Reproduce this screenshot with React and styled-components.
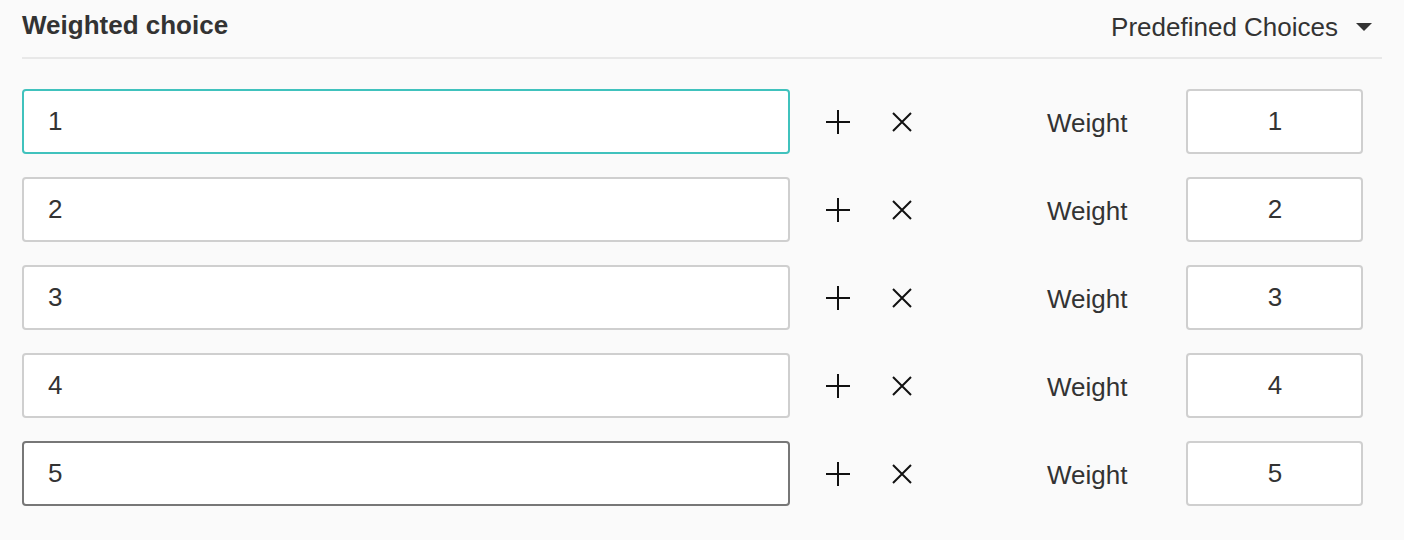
import React from 'react';
import styled, { createGlobalStyle } from 'styled-components';

const GlobalStyle = createGlobalStyle`
  html, body {
    margin: 0;
    padding: 0;
    background: #fafafa;
  }
  body {
    font-family: "Liberation Sans", Arial, sans-serif;
    color: #333;
  }
`;

const Panel = styled.div`
  padding: 0 22px;
  width: 1360px;
`;

const Header = styled.div`
  display: flex;
  align-items: flex-start;
  justify-content: space-between;
  padding: 10px 0 15px;
  border-bottom: 2px solid #e8e8e8;
`;

const Title = styled.h2`
  margin: 0;
  font-size: 26px;
  line-height: 30px;
  font-weight: bold;
  color: #333;
`;

const Dropdown = styled.button`
  display: flex;
  align-items: center;
  gap: 18px;
  padding: 0 10px 0 0;
  margin-top: 2px;
  border: 0;
  background: none;
  font-family: inherit;
  font-size: 26px;
  line-height: 30px;
  color: #333;
  cursor: pointer;
`;

const Caret = styled.span`
  width: 0;
  height: 0;
  border-left: 8px solid transparent;
  border-right: 8px solid transparent;
  border-top: 8px solid #333;
`;

const List = styled.div`
  display: flex;
  flex-direction: column;
  gap: 23px;
  padding-top: 30px;
`;

const Row = styled.div`
  display: flex;
  align-items: center;
`;

const borderColors = {
  focus: '#40c2bd',
  hover: '#777',
  idle: '#cfcfcf',
};

const ChoiceInput = styled.input`
  box-sizing: border-box;
  width: 768px;
  height: 65px;
  padding: 0 24px;
  border: 2px solid ${(p) => borderColors[p.$state]};
  border-radius: 4px;
  background: #fff;
  font-family: inherit;
  font-size: 26px;
  color: #333;
  outline: none;
`;

const Actions = styled.div`
  display: flex;
  gap: 24px;
  margin-left: 28px;
`;

const IconButton = styled.button`
  display: flex;
  align-items: center;
  justify-content: center;
  width: 40px;
  height: 40px;
  padding: 0;
  border: 0;
  background: none;
  cursor: pointer;
  svg {
    stroke: #111;
    stroke-width: 2;
  }
`;

const WeightLabel = styled.span`
  margin-left: 125px;
  font-size: 26px;
  color: #333;
  padding-top: 4px;
`;

const WeightInput = styled.input`
  box-sizing: border-box;
  width: 177px;
  height: 65px;
  margin-left: 59px;
  border: 2px solid #cfcfcf;
  border-radius: 4px;
  background: #fff;
  text-align: center;
  font-family: inherit;
  font-size: 26px;
  color: #333;
  outline: none;
`;

const PlusIcon = () => (
  <svg width="24" height="24" viewBox="0 0 24 24" fill="none">
    <path d="M12 0v24M0 12h24" />
  </svg>
);

const CloseIcon = () => (
  <svg width="20" height="20" viewBox="0 0 20 20" fill="none">
    <path d="M1 1l18 18M19 1L1 19" />
  </svg>
);

const choices = [
  { id: 1, text: '1', weight: '1', state: 'focus' },
  { id: 2, text: '2', weight: '2', state: 'idle' },
  { id: 3, text: '3', weight: '3', state: 'idle' },
  { id: 4, text: '4', weight: '4', state: 'idle' },
  { id: 5, text: '5', weight: '5', state: 'hover' },
];

const App = () => (
  <>
    <GlobalStyle />
    <Panel>
      <Header>
        <Title>Weighted choice</Title>
        <Dropdown>
          Predefined Choices
          <Caret />
        </Dropdown>
      </Header>
      <List>
        {choices.map((c) => (
          <Row key={c.id}>
            <ChoiceInput defaultValue={c.text} $state={c.state} />
            <Actions>
              <IconButton aria-label="Add">
                <PlusIcon />
              </IconButton>
              <IconButton aria-label="Remove">
                <CloseIcon />
              </IconButton>
            </Actions>
            <WeightLabel>Weight</WeightLabel>
            <WeightInput defaultValue={c.weight} />
          </Row>
        ))}
      </List>
    </Panel>
  </>
);

export default App;
